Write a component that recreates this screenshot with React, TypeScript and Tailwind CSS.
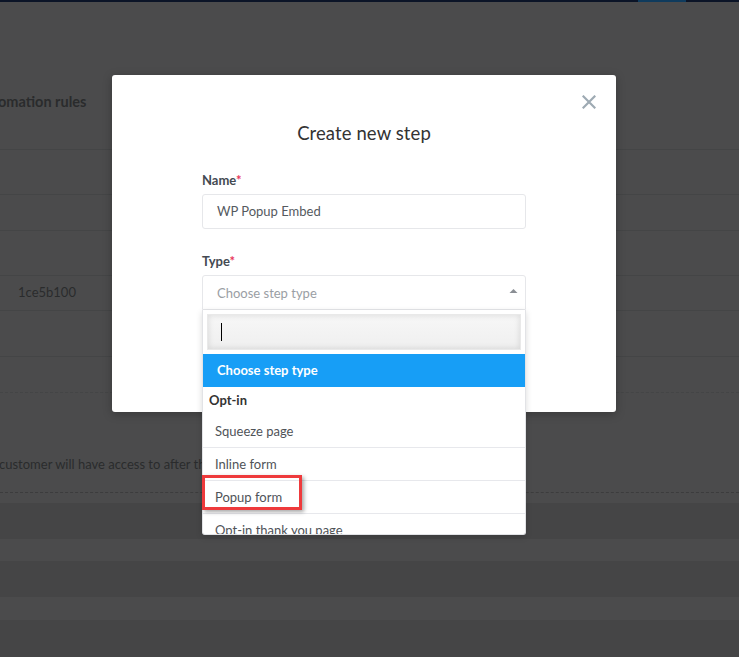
import React from "react";

const font = { fontFamily: "Lato, 'Open Sans', sans-serif" };

function BgRow({ h, children }: { h: string; children?: React.ReactNode }) {
  return (
    <div className={`${h} border-t border-[#444546] flex items-center`}>{children}</div>
  );
}

export default function App() {
  return (
    <div
      className="relative w-[739px] h-[657px] overflow-hidden bg-[#4b4b4c]"
      style={font}
    >
      {/* top navy bar */}
      <div className="h-[2px] bg-[#0b1427] flex">
        <div className="ml-[638px] w-[48px] bg-[#0f3b5d]" />
      </div>

      {/* dimmed underlying page */}
      <div className="h-[78px]" />
      <div className="h-[69px] flex items-start pt-[11px]">
        <span className="ml-[-2px] text-[14.5px] font-bold text-[#2a2b2c] whitespace-nowrap">omation rules</span>
      </div>
      <BgRow h="h-[45px]" />
      <BgRow h="h-[36px]" />
      <BgRow h="h-[45px]" />
      <BgRow h="h-[35px]">
        <span className="ml-[18px] text-[13px] text-[#2a2b2c]">1ce5b100</span>
      </BgRow>
      <BgRow h="h-[46px]" />
      <BgRow h="h-[36px]" />
      <div className="h-[101px] border-t border-[#444546] border-b border-dashed border-b-[#3c3c3d] flex items-center pt-[41px]">
        <div className="w-[202px] overflow-hidden whitespace-nowrap">
          <span className="ml-[-1px] text-[13px] text-[#2a2b2c]">
            customer will have access to after th
          </span>
        </div>
      </div>
      <div className="h-[10px] bg-[#4b4b4c]" />
      <div className="h-[36px] bg-[#454546]" />
      <div className="h-[22px] bg-[#4b4b4c]" />
      <div className="h-[36px] bg-[#454546]" />
      <div className="h-[23px] bg-[#4b4b4c]" />
      <div className="h-[37px] bg-[#454546]" />

      {/* modal */}
      <div className="absolute left-[112px] top-[75px] w-[504px] h-[337px] bg-white rounded-[3px] shadow-[0_2px_10px_rgba(0,0,0,0.25)]">
        <button className="absolute right-[20px] top-[20px] w-[14px] h-[14px] flex items-center justify-center">
          <svg width="14" height="14" viewBox="0 0 14 14">
            <path d="M1.5 1.5 L12.5 12.5 M12.5 1.5 L1.5 12.5" stroke="#9eaab3" strokeWidth="2.2" strokeLinecap="square" />
          </svg>
        </button>

        <div className="pt-[45px] text-center text-[18.5px] leading-[26px] text-[#333] tracking-[0.1px]">
          Create new step
        </div>

        <div className="ml-[90px] w-[324px] mt-[26px]">
          <div className="text-[13px] leading-[16px] font-bold text-[#444a52]">
            Name<span className="text-[#e8365a]">*</span>
          </div>
          <div className="mt-[6px] h-[35px] border border-[#e6e7ea] rounded-[3px] flex items-center pl-[14px] pt-[1px] text-[13px] text-[#555a60]">
            WP Popup Embed
          </div>

          <div className="mt-[24px] text-[13px] leading-[16px] font-bold text-[#444a52]">
            Type<span className="text-[#e8365a]">*</span>
          </div>
          <div className="relative mt-[6px]">
            <div className="h-[35px] border border-[#e6e7ea] rounded-t-[3px] flex items-center pl-[14px] pr-[6px] text-[13px] text-[#9a9ea4]">
              <span className="flex-1 pt-[3px]">Choose step type</span>
              <svg width="9" height="6" viewBox="0 0 9 6" className="mb-[3px] mr-[1px]">
                <path d="M0.5 5 L4.5 1 L8.5 5 Z" fill="#8a8e94" />
              </svg>
            </div>

            {/* dropdown */}
            <div className="absolute left-0 top-[35px] w-[324px] h-[225px] bg-white border border-[#e2e3e6] border-t-0 rounded-b-[3px] overflow-hidden shadow-[0_2px_6px_rgba(0,0,0,0.15)]">
              <div className="px-[4px] pt-[4px] pb-[4px]">
                <div className="h-[36px] bg-gradient-to-b from-[#f7f7f7] to-[#efefef] border border-[#e9e9e9] shadow-[inset_0_0_6px_rgba(0,0,0,0.12)] flex items-center pl-[13px]">
                  <div className="w-[1px] h-[18px] bg-black" />
                </div>
              </div>
              <div className="h-[33px] bg-[#179ef6] flex items-center pl-[14px] text-[13px] font-bold text-white">
                Choose step type
              </div>
              <div className="h-[28px] flex items-center pl-[6px] text-[13px] font-bold text-[#333]">
                Opt-in
              </div>
              {["Squeeze page", "Inline form", "Popup form", "Opt-in thank you page"].map((o) => (
                <div
                  key={o}
                  className="h-[33px] border-b border-[#e7e8ec] flex items-center pl-[12px] pt-[2px] text-[13px] text-[#4f5358]"
                >
                  {o}
                </div>
              ))}
            </div>

            {/* red highlight box */}
            <div className="absolute left-0 top-[200px] w-[100px] h-[35px] border-[3px] border-[#ee3a3c] shadow-[2px_2px_4px_rgba(0,0,0,0.35)]" />
          </div>
        </div>
      </div>
    </div>
  );
}
